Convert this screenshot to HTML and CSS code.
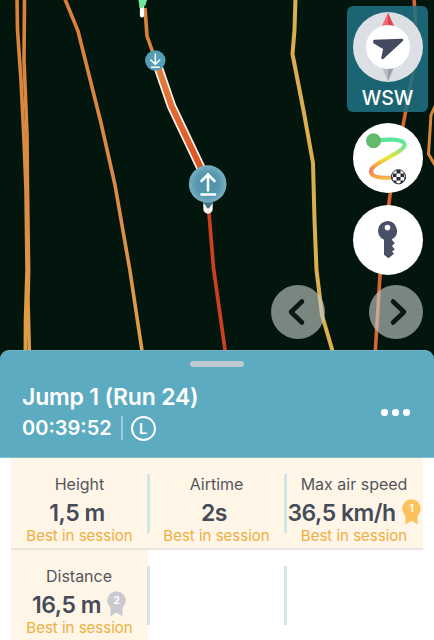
FILE: index.html
```html
<!DOCTYPE html>
<html lang="en">
<head>
<meta charset="utf-8">
<title>Jump 1 (Run 24)</title>
<link rel="stylesheet" href="styles.css">
</head>
<body>
<main class="screen">
  <section class="map">
    <svg class="tracks" width="434" height="364" viewBox="0 0 434 364">
      <defs>
        <linearGradient id="jump" x1="0" y1="60" x2="0" y2="175" gradientUnits="userSpaceOnUse"><stop offset="0" stop-color="#e2813f"/><stop offset="1" stop-color="#de4f20"/></linearGradient>
        <linearGradient id="run" x1="0" y1="0" x2="0" y2="360" gradientUnits="userSpaceOnUse"><stop offset="0" stop-color="#dc8038"/><stop offset=".6" stop-color="#dc8d48"/><stop offset="1" stop-color="#e1a143"/></linearGradient>
        <radialGradient id="pin"><stop offset="0" stop-color="#4a93ab"/><stop offset=".65" stop-color="#5799ae"/><stop offset="1" stop-color="#79b1c2"/></radialGradient>
      </defs>
      <g fill="none" stroke-linejoin="round" stroke-width="3.6">
        <g stroke="url(#run)">
          <path d="M17 -2L17.5 30L21 80L24 140L26 190L27 270L25.5 320L25.3 364"/>
          <path d="M24.5 -2L24 60L27 135L27.5 190L28.6 270L28 300L29.6 364"/>
          <path d="M64.500 -2L78 31L91 83L101 123L115 185L130 271L144 364"/>
          <path d="M145 8L147 36L153 53"/>
        </g>
        <path d="M295.500 -2L294.500 30L292.500 54L304 113L313 163L314.500 220L316.500 270L322 315L334 356" stroke="#dcae50" stroke-width="4"/>
        <path d="M414 -2L415.500 20L414 65L405 115L390 195L380 275L374.500 364" stroke="#d96534"/>
        <path d="M436 104L431 115L428.500 154L436 167" stroke="#d98838" stroke-width="3"/>
        <path d="M208.500 207L213.500 268L227 364" stroke="#cc4020" stroke-width="3.700"/>
        <path d="M142 0V15.500" stroke="#fff" stroke-width="4.200" stroke-linecap="round"/>
        <path d="M156 61L159.500 71L171.500 106L199.500 165L208 182V209" stroke="#f8f5f2" stroke-width="9.400" stroke-linecap="round"/>
        <path d="M156 61L159.500 71L171.500 106L199.500 165L208 182" stroke="url(#jump)" stroke-width="6"/>
      </g>
      <path d="M138.500 0H147L145.500 5L142 8.500L139.500 8Z" fill="#71e899"/>
      <circle cx="155.300" cy="60.500" r="10.200" fill="#559db4"/>
      <path d="M155.300 54V64M150.800 60L155.300 64.300L159.800 60M151.500 67.300H159.200" fill="none" stroke="#fff" stroke-width="1.500" stroke-linecap="round"/>
      <path d="M201 200L206 206Q208 211 210.500 206L215 200Z" fill="#3f6f80"/>
      <circle cx="207.700" cy="184" r="18.800" fill="url(#pin)"/>
      <path d="M208 190.500V174M201.500 181L208 174.300L214.500 181M201.500 194.500H215" fill="none" stroke="#fff" stroke-width="2.600" stroke-linecap="round" stroke-linejoin="round"/>
    </svg>
    <div class="tools">
      <div class="compass">
        <svg width="70" height="70" viewBox="0 0 70 70">
          <circle cx="35" cy="35" r="35" fill="#dcdfe4"/>
          <path d="M35 .5L29 14H35Z" fill="#f06a74"/><path d="M35 .5L41 14H35Z" fill="#e54154"/>
          <path d="M29.500 56H35V69.500Z" fill="#b8bbc4"/><path d="M35 56H40.500L35 69.500Z" fill="#999ea9"/>
          <circle cx="35" cy="35" r="22" fill="#fff"/>
          <path d="M21.500 28.900L49 28L29.500 46L31.500 36.500L21.500 30.500Z" fill="#434a60" stroke="#434a60" stroke-width="2.500" stroke-linejoin="round"/>
        </svg>
        <span class="heading">WSW</span>
      </div>
      <div class="tool">
        <svg width="70" height="70" viewBox="0 0 70 70">
          <defs><linearGradient id="rainbow" x1="0" y1="16" x2="0" y2="56" gradientUnits="userSpaceOnUse"><stop offset="0" stop-color="#55e6a0"/><stop offset=".22" stop-color="#80e889"/><stop offset=".48" stop-color="#f1e52e"/><stop offset=".79" stop-color="#f4785e"/><stop offset="1" stop-color="#f7b947"/></linearGradient></defs>
          <path d="M23 17.500C38 16 50 16 51.500 21C53.500 29 23 38 18.500 46C15.500 54 26 55.500 39 54.500" fill="none" stroke="url(#rainbow)" stroke-width="4.200"/>
          <circle cx="20.500" cy="17.800" r="7.500" fill="#62bb69"/>
          <circle cx="45.500" cy="53.800" r="7.100" fill="#fff" stroke="#292e38" stroke-width="1"/>
          <path d="M43.500 47H47.500V50.500H43.500ZM39.800 50.500H43.500V54H39.800ZM47.500 50.500H51.200V54H47.500ZM43.500 54H47.500V57.600H43.500ZM39.800 57.600H43.500V60L41.500 59.500ZM47.500 57.600H51.200L49 60H47.500ZM38.200 54H39.800V57.600ZM51.200 54H52.800L51.200 57.600Z" fill="#292e38"/>
        </svg>
      </div>
      <div class="tool key">
        <svg width="70" height="70" viewBox="0 0 70 70"><path fill-rule="evenodd" d="M34.500 16A9.800 9.800 0 0 1 39 34.300V35L41.800 38L39 41L41.800 44.500L39 46.500L41 48.800L35.500 53.200L31 49.800V34.800A9.800 9.800 0 0 1 34.500 16ZM34.500 19.800A2.800 2.800 0 1 0 34.500 25.400A2.800 2.800 0 1 0 34.500 19.800Z" fill="#484f66"/></svg>
      </div>
    </div>
    <div class="pager">
      <div class="page"><svg width="54" height="54" viewBox="0 0 54 54"><path d="M31 16.500L20 27L31 37.500"/></svg></div>
      <div class="page"><svg width="54" height="54" viewBox="0 0 54 54"><path d="M24 16.500L35 27L24 37.500"/></svg></div>
    </div>
  </section>
  <section class="sheet">
    <header class="sheet-head">
      <div class="handle"></div>
      <div class="head-row">
        <div>
          <h1 class="title">Jump 1 (Run 24)</h1>
          <div class="meta"><span class="time">00:39:52</span><i class="rule"></i><span class="side">L</span></div>
        </div>
        <div class="more"><i></i><i></i><i></i></div>
      </div>
    </header>
    <div class="stats">
      <div class="stat best"><span class="label">Height</span><span class="value">1,5 m</span><span class="note">Best in session</span></div>
      <div class="stat best"><span class="label">Airtime</span><span class="value">2s</span><span class="note">Best in session</span></div>
      <div class="stat best"><span class="label">Max air speed</span><span class="value">36,5 km/h<svg class="medal gold" width="19" height="26" viewBox="0 0 19 26"><path d="M3.500 14V25.500L9.500 21.500L15.500 25.500V14Z"/><circle cx="9.500" cy="9.500" r="9.300"/><text x="9.500" y="13">1</text></svg></span><span class="note">Best in session</span></div>
      <div class="stat best"><span class="label">Distance</span><span class="value">16,5 m<svg class="medal silver" width="19" height="26" viewBox="0 0 19 26"><path d="M3.500 14V25.500L9.500 21.500L15.500 25.500V14Z"/><circle cx="9.500" cy="9.500" r="9.300"/><text x="9.500" y="13">2</text></svg></span><span class="note">Best in session</span></div>
      <div class="stat"></div>
      <div class="stat"></div>
    </div>
  </section>
</main>
</body>
</html>
```

FILE: styles.css
```css
* { box-sizing: border-box; }
body { margin: 0; background: #fff; font-family: Inter, "Liberation Sans", sans-serif; }
.screen { width: 434px; height: 640px; overflow: hidden; }
.screen svg { display: block; }
.map { position: relative; height: 364px; margin-bottom: -14px; background: #03160e; }
.tracks { position: absolute; top: 0; left: 0; }
.tools { position: absolute; top: 6px; right: 6px; width: 81px; display: flex; flex-direction: column; align-items: center; }
.compass { width: 81px; height: 106px; padding-top: 6px; border-radius: 6px; background: rgba(31, 113, 131, .87); display: flex; flex-direction: column; align-items: center; }
.heading { color: #fff; font-size: 19.5px; line-height: 24px; font-weight: 500; margin-top: 4px; }
.tool { width: 70px; height: 70px; margin-top: 11px; border-radius: 50%; background: #fff; }
.key { margin-top: 12px; }
.pager { position: absolute; top: 285px; right: 11px; display: flex; gap: 44px; }
.page { width: 54px; height: 54px; border-radius: 50%; background: rgba(195, 205, 199, .62); }
.page path { fill: none; stroke: #071a14; stroke-width: 4.6; stroke-linecap: round; stroke-linejoin: round; }
.sheet { position: relative; }
.sheet-head { height: 108px; border-radius: 9px 9px 0 0; background: #5cabc1; border-top: 1px solid #78b6c7; border-bottom: 1px solid #7fbdce; padding-top: 10px; color: #fff; }
.handle { width: 54px; height: 6px; margin: 0 auto; border-radius: 3px; background: #c0c8d3; }
.head-row { display: flex; justify-content: space-between; padding: 15px 24px 0 22px; }
.title { margin: 0; font-size: 23px; line-height: 30px; font-weight: 600; letter-spacing: -.2px; white-space: nowrap; }
.meta { display: flex; align-items: center; height: 26px; margin-top: 3px; }
.time { font-size: 20px; font-weight: 600; }
.rule { width: 2px; height: 24px; margin: 0 8px 0 9px; background: #9dcddb; }
.side { width: 25px; height: 25px; border: 2px solid #fff; border-radius: 50%; font-size: 14.5px; line-height: 21px; font-weight: 600; text-align: center; }
.more { display: flex; gap: 4.5px; margin-top: 27px; }
.more i { width: 6.6px; height: 6.6px; border-radius: 50%; background: #fff; }
.stats { display: grid; grid-template-columns: 137px 137px 138px; grid-template-rows: 92px 92px; margin: 0 11px; }
.stat { position: relative; display: flex; flex-direction: column; align-items: center; padding-top: 15px; white-space: nowrap; }
.best { background: #fff6e8; }
.stat:nth-child(-n+3) { border-bottom: 2px solid #e9e4df; }
.stat:nth-child(4) .label, .stat:nth-child(4) .value { margin-left: -1px; }
.stat:not(:nth-child(3n))::after { content: ""; position: absolute; top: 16px; right: -2px; width: 3px; height: 59px; background: #d2e5e7; z-index: 1; }
.label { font-size: 16px; line-height: 22px; color: #54565c; }
.value { display: flex; align-items: center; gap: 6px; height: 30px; margin-top: 3px; padding-right: 5px; font-size: 23px; line-height: 30px; font-weight: 600; letter-spacing: -.5px; color: #454b59; }
.value:has(.medal) { padding-right: 0; }
.note { font-size: 15px; line-height: 20px; margin-top: -2px; color: #eeae40; }
.medal { position: relative; top: -1px; }
.medal text { fill: #fff; font-size: 10px; font-weight: 700; text-anchor: middle; }
.gold { fill: #fcc15b; }
.silver { fill: #c9c9cf; }
```
